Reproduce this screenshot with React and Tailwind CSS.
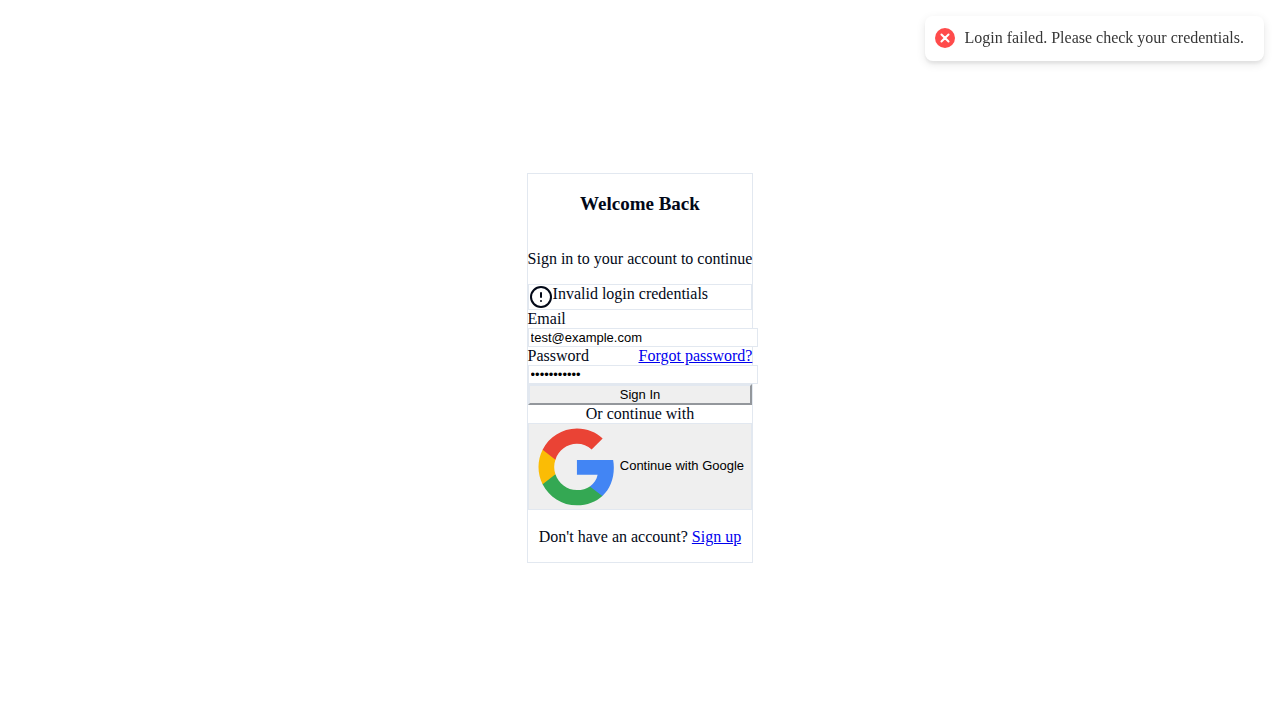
import { CircleAlert } from "lucide-react";

function GoogleLogo() {
  return (
    <svg viewBox="0 0 24 24" className="min-w-0 flex-1" aria-hidden="true">
      <path
        d="M22.56 12.25c0-.78-.07-1.53-.2-2.25H12v4.26h5.92c-.26 1.37-1.04 2.53-2.21 3.31v2.77h3.57c2.08-1.92 3.28-4.74 3.28-8.09z"
        fill="#4285F4"
      />
      <path
        d="M12 23c2.97 0 5.46-.98 7.28-2.66l-3.57-2.77c-.98.66-2.23 1.06-3.71 1.06-2.86 0-5.29-1.93-6.16-4.53H2.18v2.84C3.99 20.53 7.7 23 12 23z"
        fill="#34A853"
      />
      <path
        d="M5.84 14.09c-.22-.66-.35-1.36-.35-2.09s.13-1.43.35-2.09V7.07H2.18C1.43 8.55 1 10.22 1 12s.43 3.45 1.18 4.93l2.85-2.22.81-.62z"
        fill="#FBBC05"
      />
      <path
        d="M12 5.38c1.62 0 3.06.56 4.21 1.64l3.15-3.15C17.45 2.09 14.97 1 12 1 7.7 1 3.99 3.47 2.18 7.07l3.66 2.84c.87-2.6 3.3-4.53 6.16-4.53z"
        fill="#EA4335"
      />
    </svg>
  );
}

function Toast({ message }) {
  return (
    <div
      role="status"
      className="fixed top-4 right-4 flex items-center rounded-lg bg-white px-[10px] pt-2 pb-[9px] leading-5 text-[#363636] shadow-[0_3px_10px_rgba(0,0,0,0.1),0_3px_3px_rgba(0,0,0,0.05)]"
    >
      <svg viewBox="0 0 20 20" className="size-5 shrink-0" aria-hidden="true">
        <circle cx="10" cy="10" r="10" fill="#ff4b4b" />
        <path
          d="M6.46 6.46l7.08 7.08M13.54 6.46l-7.08 7.08"
          stroke="#fff"
          strokeWidth="2"
          strokeLinecap="round"
        />
      </svg>
      <p className="mx-[10px] my-1">{message}</p>
    </div>
  );
}

const inputClass =
  "box-content block h-[15px] w-full border border-[#e2e8f0] bg-white px-[2px] py-px font-['Liberation_Sans',sans-serif] text-[13px] leading-[15px] text-black outline-none";

const linkClass = "text-[#0000ee] underline";

export default function App() {
  return (
    <main className="flex min-h-screen items-center justify-center bg-white pt-4 font-['Liberation_Serif',serif] text-base leading-[18px] text-[#020817]">
      <Toast message="Login failed. Please check your credentials." />
      <section className="border border-[#e2e8f0]">
        <header className="text-center">
          <h3 className="py-[19px] text-[19px] leading-[22px] font-bold">Welcome Back</h3>
          <p className="py-4">Sign in to your account to continue</p>
        </header>

        <form onSubmit={(event) => event.preventDefault()}>
          <div role="alert" className="flex border border-[#e2e8f0]">
            <CircleAlert className="size-6 shrink-0" aria-hidden="true" />
            <span>Invalid login credentials</span>
          </div>

          <label htmlFor="email" className="block">
            Email
          </label>
          <input id="email" type="email" defaultValue="test@example.com" className={inputClass} />

          <div className="flex justify-between">
            <label htmlFor="password">Password</label>
            <a href="#forgot-password" className={linkClass}>
              Forgot password?
            </a>
          </div>
          <input id="password" type="password" defaultValue="password123" className={inputClass} />

          <button
            type="submit"
            className="block w-full border-2 border-[#e2e8f0] bg-[#efefef] py-px font-['Liberation_Sans',sans-serif] text-[13px] leading-[15px] text-black [border-style:outset]"
          >
            Sign In
          </button>
        </form>

        <p className="text-center">Or continue with</p>

        <button
          type="button"
          className="flex w-full items-center border border-[#e2e8f0] bg-[#efefef] px-[6px] py-px font-['Liberation_Sans',sans-serif] text-[13px] text-black"
        >
          <GoogleLogo />
          <span className="w-[127px] shrink-0 text-center">Continue with Google</span>
        </button>

        <p className="pt-[18px] pb-4 text-center">
          Don't have an account?{" "}
          <a href="#sign-up" className={linkClass}>
            Sign up
          </a>
        </p>
      </section>
    </main>
  );
}
